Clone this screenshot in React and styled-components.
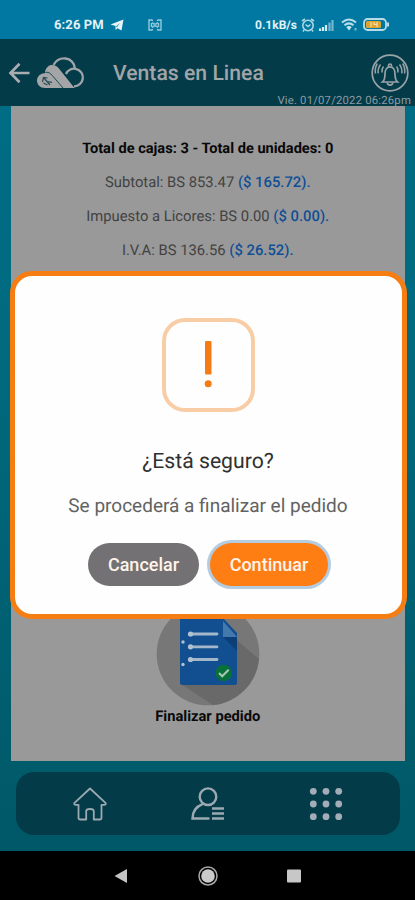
import styled, { createGlobalStyle } from "styled-components";

const GlobalStyle = createGlobalStyle`
  * {
    box-sizing: border-box;
  }
  body {
    margin: 0;
    background: #000;
    font-family: Roboto, "Liberation Sans", sans-serif;
    text-rendering: geometricPrecision;
  }
`;

const Screen = styled.div`
  position: relative;
  width: 415px;
  height: 900px;
  overflow: hidden;
  display: flex;
  flex-direction: column;
  background: linear-gradient(#00779f 39px, #006c85 106px, #006b80 320px, #005867 851px);
`;

const StatusBar = styled.div`
  height: 39px;
  padding: 10px 25px 0 54px;
  display: flex;
  align-items: center;
  background: #0078a2;
  color: #e2f1f5;
  font-size: 13px;
  font-weight: 700;
  white-space: nowrap;
`;

const Clock = styled.span`
  width: 56px;
  padding-top: 2px;
  letter-spacing: 0.1px;
`;

const Speed = styled.span`
  width: 45px;
  margin-left: 93px;
  font-size: 12px;
`;

const StatusIcon = styled.svg`
  flex: none;
  margin-left: ${(p) => p.$gap || 0}px;
`;

const Header = styled.header`
  height: 67px;
  display: flex;
  flex-direction: column;
  background: #043b49;
  color: #a1a5a8;
`;

const HeaderRow = styled.div`
  height: 54px;
  padding: 13px 6px 0 8px;
  display: flex;
  align-items: center;
`;

const Logo = styled.svg`
  flex: none;
  margin-left: 6px;
`;

const Title = styled.h1`
  flex: 1;
  margin: 0 0 0 28px;
  padding-top: 2px;
  font-size: 21.2px;
  font-weight: 500;
  line-height: 39px;
  white-space: nowrap;
`;

const DateText = styled.div`
  padding: 1px 4px 0 0;
  font-size: 11.3px;
  line-height: 14px;
  letter-spacing: 0.2px;
  text-align: right;
  color: #8d9ca2;
`;

const Card = styled.main`
  height: 655px;
  margin: 0 10.5px 0 11px;
  padding-top: 25px;
  display: flex;
  flex-direction: column;
  align-items: center;
  background: #999;
`;

const Total = styled.div`
  height: 34px;
  line-height: 34px;
  font-size: ${(p) => (p.$bold ? 14.6 : 14.8)}px;
  font-weight: ${(p) => (p.$bold ? 700 : 400)};
  color: ${(p) => (p.$bold ? "#080808" : "#424242")};
  white-space: nowrap;
`;

const Usd = styled.span`
  font-weight: 500;
  color: #104f96;
`;

const FinishButton = styled.div`
  margin-top: 334px;
  display: flex;
  flex-direction: column;
  align-items: center;
  font-size: 14.7px;
  font-weight: 700;
  line-height: 20px;
  color: #090909;
`;

const BottomBar = styled.nav`
  flex: none;
  height: 63px;
  margin: 11px 15px 0 16px;
  padding: 0 57.5px 0 57px;
  display: flex;
  align-items: center;
  justify-content: space-between;
  border-radius: 18px;
  background: #043b48;
`;

const SystemNav = styled.div`
  flex: none;
  height: 49px;
  margin-top: 16px;
  padding: 0 113px;
  display: flex;
  align-items: center;
  justify-content: space-between;
  background: #000;
`;

const Dialog = styled.section`
  position: absolute;
  left: 9.5px;
  top: 271px;
  width: 397px;
  height: 348px;
  padding-top: 42px;
  display: flex;
  flex-direction: column;
  align-items: center;
  border: 5px solid #f67d12;
  border-radius: 22px;
  background: #fefefe;
`;

const WarningIcon = styled.div`
  width: 93px;
  height: 94px;
  display: flex;
  align-items: center;
  justify-content: center;
  border: 4px solid #f8cda5;
  border-radius: 23px;
`;

const Question = styled.h2`
  margin: 36px 0 0;
  font-size: 21.2px;
  font-weight: 400;
  line-height: 28px;
  color: #303030;
`;

const Message = styled.p`
  margin: 17px 0 0;
  font-size: 19px;
  line-height: 26px;
  color: #626262;
`;

const Actions = styled.div`
  margin-top: 24px;
  display: flex;
  gap: 11px;
`;

const Button = styled.button`
  width: ${(p) => p.$width}px;
  height: 43px;
  padding: 0;
  border: none;
  border-radius: 22px;
  background: ${(p) => (p.$primary ? "#fe7e14" : "#737173")};
  box-shadow: ${(p) => (p.$primary ? "0 0 0 3px #b5cce0" : "none")};
  color: #fff4ea;
  font-family: inherit;
  font-size: 18px;
  font-weight: 500;
`;

function BackIcon() {
  return (
    <svg width="22" height="22" viewBox="0 0 22 22" fill="none" stroke="#a9adb0" strokeWidth="2.7">
      <path d="M11.5 1.7 2.5 11l9 9.3M2.5 11h19" />
    </svg>
  );
}

function CloudLogo() {
  return (
    <Logo width="49" height="34" viewBox="0 0 49 34">
      <g fill="none" stroke="#9da5a9" strokeWidth="2.3">
        <path d="M17.5 9C20 4.5 24.5 2 29.5 2.5c5 .5 9 4.5 9.500 10" />
        <path d="M30 18a8.800 8.800 0 1 1 8 12.300" />
      </g>
      <path
        d="M12 10.5c3-2.500 8-1.500 10.500 1.500L38.500 32H9C4 32 1 28.500 1 24.500 1 20 5 17 10 17l-1-1c.5-2.500 1.200-4 3-5.500z"
        fill="#a3a5a7"
      />
      <path d="M10 16.200c3 0 4.500 1.300 6 3L27 32" fill="none" stroke="#254b56" strokeWidth="1" />
      <path
        d="m6.500 26 1-4.500 4 .5M8 22l6 7m-3-3.500 5 .8M7.500 27l4 2"
        fill="none"
        stroke="#294c57"
        strokeWidth="1.2"
      />
    </Logo>
  );
}

function BellIcon() {
  return (
    <svg width="38" height="38" viewBox="0 0 38 38" fill="none" stroke="#98a3a8" strokeWidth="1.7">
      <circle cx="19" cy="19" r="17.8" />
      <path d="M11.500 28c2.200-2 2.500-4 2.500-8 0-4 1.800-7.200 5-7.200s5 3.200 5 7.200c0 4 .3 6 2.500 8z" />
      <path d="M17.500 12.500v-1c0-2 3-2 3 0v1M16.200 28.500c.2 3.400 5.400 3.400 5.600 0" />
      <path
        d="M12.500 12.500q-2 2.500-1.500 6M9.500 10.500q-3 4-2.300 8.800M6.300 9.500Q3.500 14 4.500 19.500M25.500 12.500q2 2.500 1.500 6M28.500 10.500q3 4 2.300 8.800M31.700 9.500q2.800 4.500 1.800 10"
        strokeWidth="1.5"
      />
    </svg>
  );
}

function OrderIcon() {
  return (
    <svg width="104" height="105" viewBox="0 0 104 105">
      <circle cx="52" cy="53" r="51.3" fill="#777" />
      <path d="m77 36 26 22a51 51 0 0 1-46 46L25 83z" fill="#696969" />
      <path d="M24 17h43l14 15v50q0 2-2 2H26q-2 0-2-2z" fill="#124f91" />
      <path d="m67 36 14 14V36z" fill="#0c3e78" />
      <path d="M67 20v16h14z" fill="#4379ac" />
      <path
        d="M36 33h25M36 45.800h25M36 58.500h25"
        stroke="#a3b7ca"
        strokeWidth="2.8"
        strokeLinecap="round"
      />
      <g fill="#b1c1d0">
        <circle cx="34.5" cy="33" r="2.6" />
        <circle cx="34.5" cy="45.8" r="2.6" />
        <circle cx="34.5" cy="58.5" r="2.6" />
        <circle cx="27" cy="41" r="1.7" />
        <circle cx="27" cy="63.5" r="1.7" />
      </g>
      <circle cx="67.7" cy="72" r="8.3" fill="#087039" />
      <path d="m63 72 3.200 3.300 6.500-6.500" fill="none" stroke="#a9c7b5" strokeWidth="2" />
    </svg>
  );
}

export default function App() {
  return (
    <>
      <GlobalStyle />
      <Screen>
        <StatusBar>
          <Clock>6:26 PM</Clock>
          <StatusIcon width="14" height="12" viewBox="0 0 14 12">
            <path d="M.5 5.500 13.500.5 11.500 11.500 7.500 9.200 5.500 11V7z" fill="#e6f3f7" />
            <path d="m5.500 7.500 4.500-3.500-3 4.500" fill="#5ba6c1" />
          </StatusIcon>
          <StatusIcon $gap={24} width="14" height="12" viewBox="0 0 14 12">
            <path
              d="M5 1.500 3.500 1H1v10h2.500l1.500-.5M9 1.500l1.500-.5H13v10h-2.500L9 10.500M4 3.500 6 5h2l2-1.500M4 8.500 6 7h2l2 1.500M3.500 4v4M10.500 4v4"
              fill="none"
              stroke="#93cbdc"
              strokeWidth="1.4"
            />
          </StatusIcon>
          <Speed>0.1kB/s</Speed>
          <StatusIcon $gap={1} width="14" height="14" viewBox="0 0 14 14">
            <g fill="none" stroke="#a9d6e5" strokeWidth="1.6">
              <circle cx="7" cy="7.5" r="5.2" />
              <path d="m1 3 3-2M13 3l-3-2M4.500 6.500 7 8.500l2.500-2M3 12l-1 1.500M11 12l1 1.500" />
            </g>
          </StatusIcon>
          <StatusIcon $gap={4} width="15" height="12" viewBox="0 0 15 12">
            <path d="M1 9.500V12M4 8v4M7 6v6" stroke="#d5ebf3" strokeWidth="2.2" />
            <path d="M10.500 3.500V12M13.500 1v11" stroke="#75b6cf" strokeWidth="2.2" />
          </StatusIcon>
          <StatusIcon $gap={7} width="17" height="13" viewBox="0 0 17 13">
            <path
              d="M1 4.500q7-6 14 0M3.500 7.300q4.500-3.800 9 0"
              fill="none"
              stroke="#b8dce9"
              strokeWidth="2"
            />
            <path d="m5.300 9 2.700 3.500L10.700 9q-2.700-2-5.400 0z" fill="#cbe5ee" />
            <path d="M14.500 10v2.500" stroke="#75b6cf" strokeWidth="2" />
          </StatusIcon>
          <StatusIcon $gap={5} width="27" height="13" viewBox="0 0 27 13">
            <rect x="1" y="1" width="22" height="11" rx="3.5" fill="none" stroke="#b9dbe7" strokeWidth="1.8" />
            <rect x="3" y="3" width="15" height="7" rx="1.5" fill="#dba62f" />
            <path d="M8 4v5M11 4v2.500h3M14 4v5" stroke="#f5ddb0" strokeWidth="1.2" fill="none" />
            <path d="M25 4.500v4" stroke="#b9dbe7" strokeWidth="2" />
          </StatusIcon>
        </StatusBar>
        <Header>
          <HeaderRow>
            <BackIcon />
            <CloudLogo />
            <Title>Ventas en Linea</Title>
            <BellIcon />
          </HeaderRow>
          <DateText>Vie. 01/07/2022 06:26pm</DateText>
        </Header>
        <Card>
          <Total $bold>Total de cajas: 3 - Total de unidades: 0</Total>
          <Total>
            Subtotal: BS 853.47 <Usd>($ 165.72).</Usd>
          </Total>
          <Total>
            Impuesto a Licores: BS 0.00 <Usd>($ 0.00).</Usd>
          </Total>
          <Total>
            I.V.A: BS 136.56 <Usd>($ 26.52).</Usd>
          </Total>
          <FinishButton>
            <OrderIcon />
            Finalizar pedido
          </FinishButton>
        </Card>
        <BottomBar>
          <svg width="34" height="34" viewBox="0 0 34 34" fill="none" stroke="#9ba9b1" strokeWidth="1.8" strokeLinejoin="round">
            <path d="M17 1.500 1.500 15.800q-1 2 1.500 2h2.500v13q0 1.700 1.700 1.700h6v-8.200q0-2.300 3.800-2.300t3.800 2.300v8.200h6q1.700 0 1.700-1.700v-13H31q2.500 0 1.500-2z" />
          </svg>
          <svg width="34" height="34" viewBox="0 0 34 34" fill="none" stroke="#9ba9b1" strokeWidth="2.4">
            <circle cx="17" cy="9.7" r="8.3" />
            <path d="M11.500 17.200C4.500 20 1.500 25 1.500 31.500h16" strokeLinecap="round" />
            <path d="M21 21.500h12M21 26.500h12M21 31.500h12" />
          </svg>
          <svg width="34" height="34" viewBox="0 0 34 34" fill="#a3adb7">
            {[4.3, 17, 29.7].map((y) =>
              [4.3, 17, 29.7].map((x) => <circle key={`${x}-${y}`} cx={x} cy={y} r="3.4" />)
            )}
          </svg>
        </BottomBar>
        <SystemNav>
          <svg width="16" height="16" viewBox="0 0 16 16">
            <path d="M1.500 8 14 1v14z" fill="#c4c4c4" />
          </svg>
          <svg width="20" height="20" viewBox="0 0 20 20">
            <circle cx="10" cy="10" r="9" fill="none" stroke="#aaa" strokeWidth="1.5" />
            <circle cx="10" cy="10" r="6.8" fill="#cacaca" />
          </svg>
          <svg width="16" height="16" viewBox="0 0 16 16">
            <rect x="1" y="1.5" width="14" height="13" rx="1" fill="#c7c7c7" />
          </svg>
        </SystemNav>
        <Dialog>
          <WarningIcon>
            <svg width="8" height="48" viewBox="0 0 8 48" fill="#f57b14">
              <rect x="1" width="6.5" height="33.5" rx="1" />
              <circle cx="4.2" cy="42.7" r="3.5" />
            </svg>
          </WarningIcon>
          <Question>¿Está seguro?</Question>
          <Message>Se procederá a finalizar el pedido</Message>
          <Actions>
            <Button $width={111}>Cancelar</Button>
            <Button $width={118} $primary>
              Continuar
            </Button>
          </Actions>
        </Dialog>
      </Screen>
    </>
  );
}
